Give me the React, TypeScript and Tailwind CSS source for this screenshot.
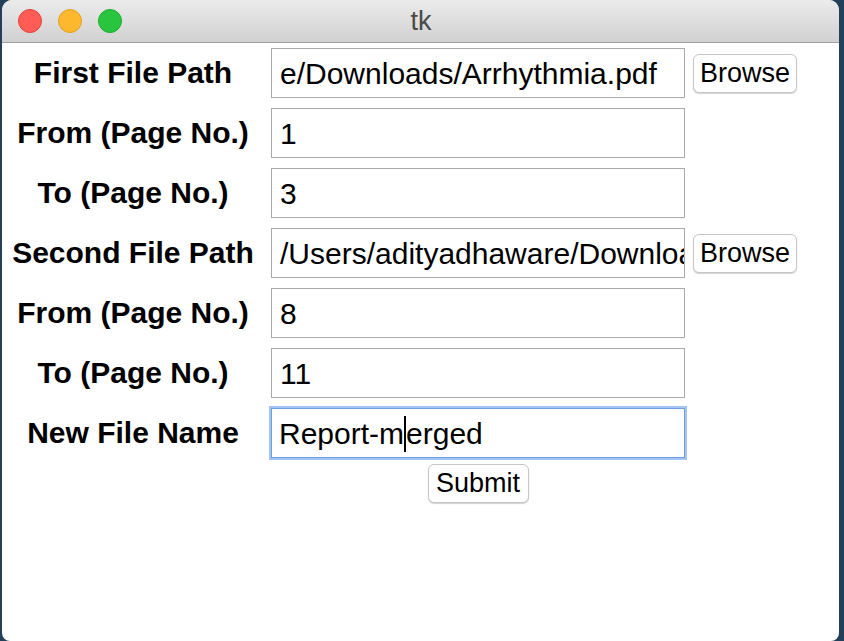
const ROWS = [
  { label: 'First File Path', value: 'e/Downloads/Arrhythmia.pdf', browse: true },
  { label: 'From (Page No.)', value: '1' },
  { label: 'To (Page No.)', value: '3' },
  { label: 'Second File Path', value: '/Users/adityadhaware/Downloads/Report.pdf', browse: true },
  { label: 'From (Page No.)', value: '8' },
  { label: 'To (Page No.)', value: '11' },
];

const font = { fontFamily: '"Liberation Sans", Arial, Helvetica, sans-serif' };

function Button({ children, w }: { children: string; w: string }) {
  return (
    <div
      className={`${w} h-[39px] flex items-center justify-center rounded-[6px] border border-[#c6c6c6] bg-white text-[27px] leading-none text-black shadow-[0_1px_1px_rgba(0,0,0,0.18)]`}
    >
      {children}
    </div>
  );
}

export default function App() {
  return (
    <div className="w-[844px] h-[641px] bg-[#23405a] overflow-hidden" style={font}>
      <div className="ml-[2px] mr-[5px] h-[641px] bg-white rounded-t-[10px] rounded-b-[8px] overflow-hidden flex flex-col">
        {/* ── Title bar ─────────────────────────────────────────── */}
        <div className="relative h-[43px] shrink-0 bg-gradient-to-b from-[#ebebeb] to-[#d1d1d1] border-b border-[#a3a3a3] flex items-center">
          <div className="flex items-center gap-[16px] pl-[16px]">
            <span className="w-[24px] h-[24px] rounded-full bg-[#fe5c55] border border-[#e0443e]" />
            <span className="w-[24px] h-[24px] rounded-full bg-[#feb82d] border border-[#dea123]" />
            <span className="w-[24px] h-[24px] rounded-full bg-[#29c53f] border border-[#1dad2b]" />
          </div>
          <div className="absolute inset-0 flex items-center justify-center text-[27px] text-[#4a4a4a] leading-none pl-[1px]">
            tk
          </div>
        </div>

        {/* ── Form ─────────────────────────────────────────────── */}
        <div className="flex flex-col gap-[10px] pt-[5px]">
          {ROWS.map((r, i) => (
            <div key={i} className="flex items-center h-[50px]">
              <div className="w-[262px] text-center font-bold text-[30px] leading-none text-black">{r.label}</div>
              <div className="ml-[7px] w-[414px] h-[50px] border border-[#aaaaaa] bg-white flex items-center pl-[8px] pt-[2px] overflow-hidden whitespace-nowrap text-[30px] leading-none text-black">
                {r.value}
              </div>
              {r.browse && (
                <div className="ml-[8px]">
                  <Button w="w-[104px]">Browse</Button>
                </div>
              )}
            </div>
          ))}

          <div className="flex items-center h-[50px]">
            <div className="w-[262px] text-center font-bold text-[30px] leading-none text-black">New File Name</div>
            <div className="ml-[7px] w-[414px] h-[50px] border border-[#6e9de0] outline outline-[2px] outline-[#a3c4f5] bg-white flex items-center pl-[7px] pt-[2px] whitespace-nowrap text-[30px] leading-none text-black">
              <span>Report-m</span>
              <span className="w-[2px] h-[36px] bg-black" />
              <span>erged</span>
            </div>
          </div>
        </div>

        <div className="flex pt-[6px]">
          <div className="w-[269px]" />
          <div className="w-[414px] flex justify-center">
            <Button w="w-[101px]">Submit</Button>
          </div>
        </div>
      </div>
    </div>
  );
}
